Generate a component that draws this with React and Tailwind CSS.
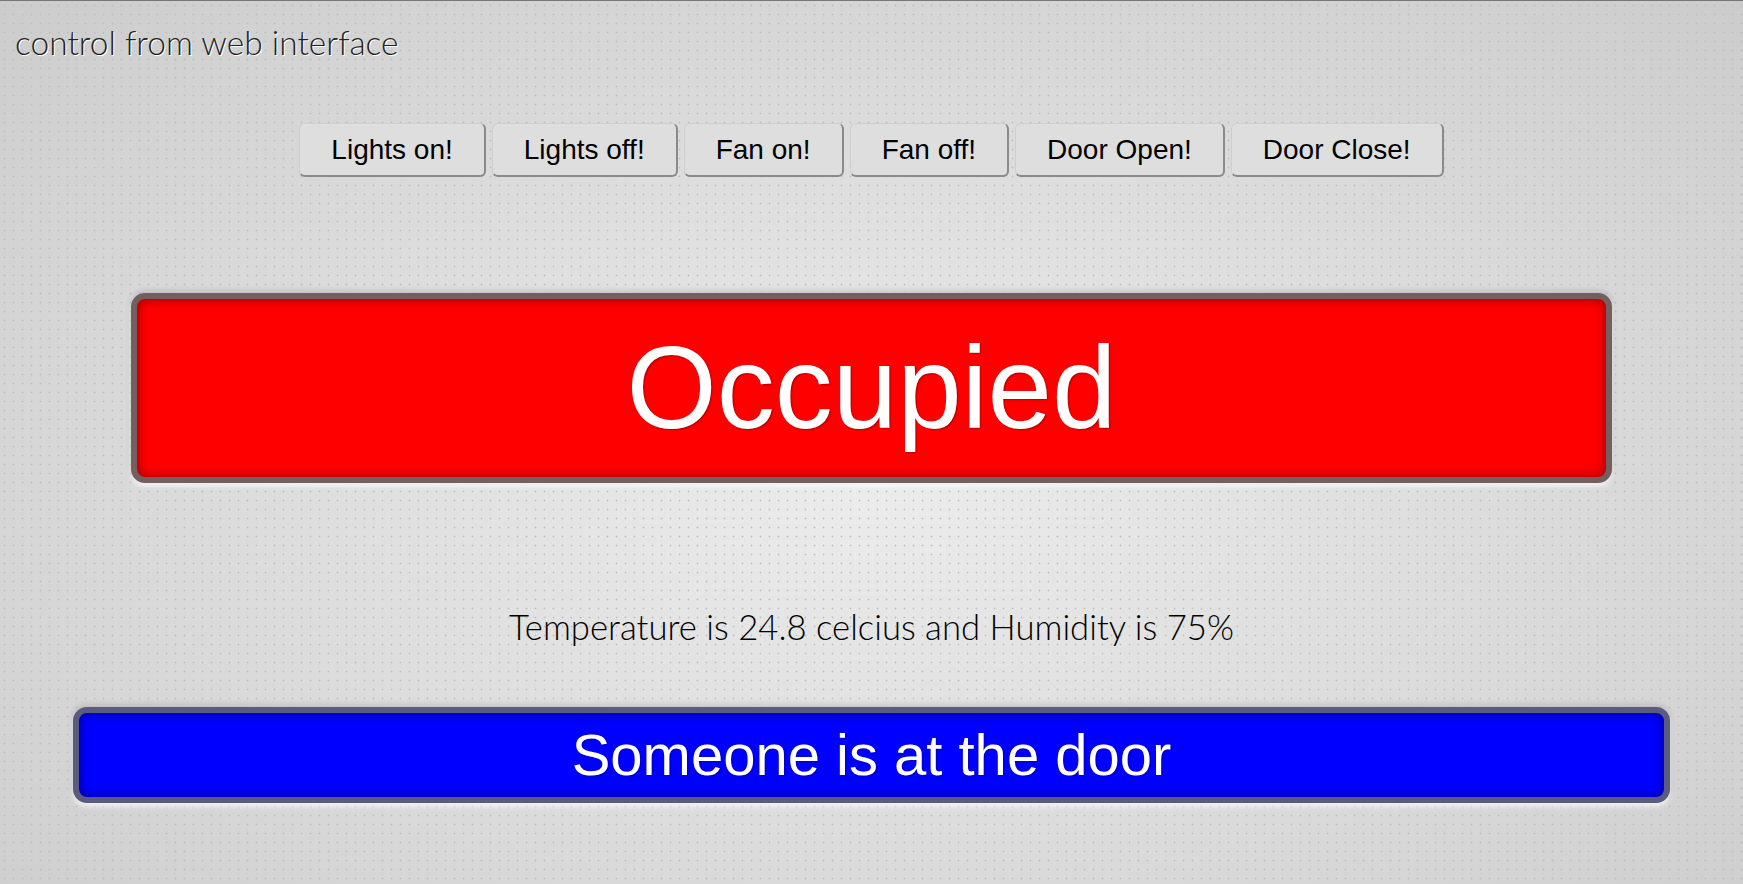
import React from 'react';

const buttons = ['Lights on!', 'Lights off!', 'Fan on!', 'Fan off!', 'Door Open!', 'Door Close!'];

const App = () => {
  return (
    <div className="min-h-screen w-full border-t border-[#777] bg-[radial-gradient(circle,#bdbdbd_0.8px,transparent_1.1px),radial-gradient(ellipse_at_50%_55%,#ececec_0%,#dedede_45%,#cccccc_100%)] bg-[length:9px_9px,100%_100%] pb-10">
      <div className="pl-[15px] pt-[21px] text-[33.5px] leading-[40px] font-light text-[#222] font-['Lato',sans-serif] [text-shadow:1px_1px_0_#fff]">
        control from web interface
      </div>

      <div className="mt-[61px] flex justify-center gap-[6px]">
        {buttons.map(b => (
          <button
            key={b}
            className="h-[54px] px-[31px] rounded-[6px] bg-[#dedede] border border-[#cfcfcf] border-r-2 border-b-2 border-r-[#8a8a8a] border-b-[#8a8a8a] text-[28px] text-black font-['Liberation_Sans',Arial,sans-serif]"
          >
            {b}
          </button>
        ))}
      </div>

      <div className="mt-[116px] flex justify-center">
        <div className="w-[85%] h-[190px] rounded-[14px] border-[6px] border-[#735e60] bg-[#ff0000] flex items-center justify-center shadow-[inset_0_0_12px_rgba(0,0,0,0.45),0_-2px_6px_rgba(0,0,0,0.15),0_3px_5px_rgba(255,255,255,0.9)]">
          <span className="text-[116px] leading-none text-white font-['Liberation_Sans',Arial,sans-serif] [text-shadow:1px_1px_2px_rgba(0,0,0,0.35)]">
            Occupied
          </span>
        </div>
      </div>

      <div className="mt-[124px] text-center text-[34.7px] leading-[40px] font-light text-black font-['Lato',sans-serif]">
        Temperature is 24.8 celcius and Humidity is 75%
      </div>

      <div className="mt-[60px] flex justify-center">
        <div className="w-[91.6%] h-[96px] rounded-[14px] border-[6px] border-[#5b5b7e] bg-[#0000ff] flex items-center justify-center shadow-[inset_0_0_12px_rgba(0,0,0,0.45),0_-2px_6px_rgba(0,0,0,0.15),0_3px_5px_rgba(255,255,255,0.9)]">
          <span className="text-[58px] leading-none text-white font-['Liberation_Sans',Arial,sans-serif] [text-shadow:1px_1px_2px_rgba(0,0,0,0.3)]">
            Someone is at the door
          </span>
        </div>
      </div>
    </div>
  );
};

export default App;
